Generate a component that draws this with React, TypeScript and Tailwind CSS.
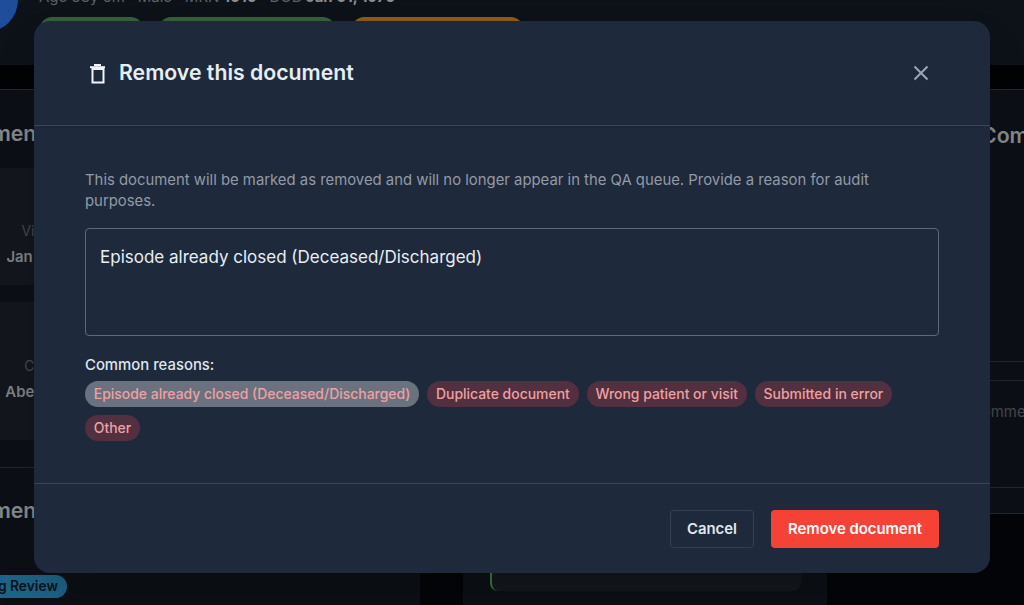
import React from "react";

const chips = [
  "Episode already closed (Deceased/Discharged)",
  "Duplicate document",
  "Wrong patient or visit",
  "Submitted in error",
  "Other",
];

function Background() {
  return (
    <div className="h-[605px] w-[1024px] overflow-hidden bg-[#030508] flex flex-col">
      <header className="h-[65px] shrink-0 bg-[#0d1118] flex items-start">
        <div className="w-16 h-16 rounded-full bg-[#1f4d9a] -ml-[46px] -mt-[32px] shrink-0" />
        <div className="ml-[21px] -mt-[12px]">
          <div className="text-[15px] leading-[18px] text-[#5b616b] whitespace-nowrap">
            Age 58y 6m · Male · MRN <b className="text-[#8a8f96]">1010</b> · DOB <b className="text-[#8a8f96]">Jan 01, 1970</b>
          </div>
          <div className="flex mt-[11px] ml-[1px]">
            <div className="w-[103px] h-6 rounded-full bg-[#33603a]" />
            <div className="ml-[16px] w-[176px] h-6 rounded-full bg-[#33603a]" />
            <div className="ml-[17px] w-[171px] h-6 rounded-full bg-[#8a5a1e]" />
          </div>
        </div>
      </header>
      <div className="h-[25px] shrink-0 bg-[#020305] border-b border-[#23272e]" />
      <main className="flex-1 flex min-h-0">
        <section className="w-[420px] shrink-0 bg-[#0c1016]">
          <h2 className="-ml-[62px] mt-[27px] text-[21.25px] leading-[32px] font-semibold text-[#85888d] whitespace-nowrap">Documents</h2>
          <div className="mt-[19px] h-[117px] bg-[#13171d] pt-[53px]">
            <div className="w-[105px] text-center leading-[20px] whitespace-nowrap">
              <div className="text-[13.8px] text-[#44484e]">Visit Date</div>
              <div className="mt-[6px] text-[14.9px] font-semibold text-[#7d8085]">Jan 01, 2025</div>
            </div>
          </div>
          <div className="mt-[17px] h-[138px] bg-[#13171d] pt-[54px]">
            <div className="w-[104px] text-center leading-[20px] whitespace-nowrap">
              <div className="text-[13.8px] text-[#44484e]">Clinician</div>
              <div className="mt-[6px] text-[14.9px] font-semibold text-[#7d8085]">Abel Tesfaye</div>
            </div>
          </div>
          <div className="mt-[27px] border-t border-[#23272e] pt-[26px]">
            <h2 className="-ml-[62px] text-[21.25px] leading-[32px] font-semibold text-[#85888d] whitespace-nowrap">Documents</h2>
          </div>
          <div className="mt-[49px] -ml-[60px] w-[127px] h-[23px] rounded-full bg-[#1d6487] text-[13.8px] leading-[23px] font-semibold text-right pr-[9px] text-[#0c1016] whitespace-nowrap">
            Pending Review
          </div>
        </section>
        <div className="w-[43px] shrink-0" />
        <section className="w-[364px] shrink-0 bg-[#0c1016] flex flex-col justify-end pb-[14px] pl-[27px] pr-[26px]">
          <div className="h-[40px] bg-[#14171c] rounded-[8px] border-l-2 border-[#3b7a3f]" />
        </section>
        <div className="w-[133px] shrink-0" />
        <section className="flex-1 min-w-0 h-[424px] bg-[#0c1016] overflow-hidden">
          <h2 className="pl-[21px] mt-[29px] text-[21.25px] leading-[32px] font-semibold text-[#85888d] whitespace-nowrap">Comments</h2>
          <div className="mt-[210px] h-[19px] border-t border-[#23272e]" />
          <div className="h-[107px] bg-[#0c1016] border-t border-[#23272e] pl-[11px] pt-[21px] text-[14.9px] leading-[20px] text-[#44484e] whitespace-nowrap">Comment</div>
          <div className="h-[27px] border-t border-[#23272e] border-b" />
        </section>
      </main>
    </div>
  );
}

export default function App() {
  return (
    <div className="relative w-[1024px] h-[605px] overflow-hidden font-['Inter',sans-serif]">
      <Background />
      <div className="absolute left-[34px] top-[21px] w-[956px] h-[552px] rounded-[16px] bg-[#1e293b] flex flex-col shadow-2xl">
        <div className="h-[105px] shrink-0 border-b border-[#3a4556] flex items-center pl-[51px] pr-[57px]">
          <svg width="24" height="24" viewBox="0 0 24 24" fill="none" stroke="#f1f5f9" className="shrink-0 -mt-[1px]">
            <path d="M5 6.2h15" strokeWidth="2" />
            <path d="M9 4h7" strokeWidth="2" />
            <rect x="7.5" y="8" width="11" height="13.5" strokeWidth="2" />
          </svg>
          <h2 className="ml-[10px] -mt-[3px] text-[21.25px] leading-[30px] font-semibold text-[#e8eef5] whitespace-nowrap">Remove this document</h2>
          <svg width="24" height="24" viewBox="0 0 24 24" fill="none" stroke="#9aa6b5" strokeWidth="2" className="ml-auto shrink-0">
            <path d="M5.5 5.5l13 13M18.5 5.5l-13 13" />
          </svg>
        </div>
        <div className="flex-1 px-[51px] pt-[44px]">
          <p className="text-[14.875px] leading-[21px] text-[#939aa6]">
            This document will be marked as removed and will no longer appear in the QA queue. Provide a reason for audit purposes.
          </p>
          <div className="mt-[16px] h-[108px] rounded-[4px] border border-[#5d6878] px-[14px] py-[15px] text-[17px] leading-[26px] text-[#e8eef5]">
            Episode already closed (Deceased/Discharged)
          </div>
          <div className="mt-[19px] text-[14.875px] leading-[20px] font-medium text-[#dfe6ee]">Common reasons:</div>
          <div className="mt-[6px] flex flex-wrap gap-x-[8px] gap-y-[8px]">
            {chips.map((c, i) => (
              <span
                key={c}
                className={`h-[26px] px-[8.8px] rounded-full text-[13.95px] leading-[26px] font-medium text-[#efa0a3] whitespace-nowrap ${
                  i === 0 ? "bg-[#6a7280]" : "bg-[#52303f]"
                }`}
              >
                {c}
              </span>
            ))}
          </div>
        </div>
        <div className="h-[90px] shrink-0 border-t border-[#3a4556] flex items-start justify-end gap-[17px] pt-[26px] pr-[51px]">
          <button className="h-[38px] w-[84px] rounded-[4px] border border-[#334155] text-[14.875px] font-semibold text-[#e2e8f0]">Cancel</button>
          <button className="h-[38px] w-[168px] rounded-[4px] bg-[#f44336] text-[14.875px] font-semibold text-white">Remove document</button>
        </div>
      </div>
    </div>
  );
}
